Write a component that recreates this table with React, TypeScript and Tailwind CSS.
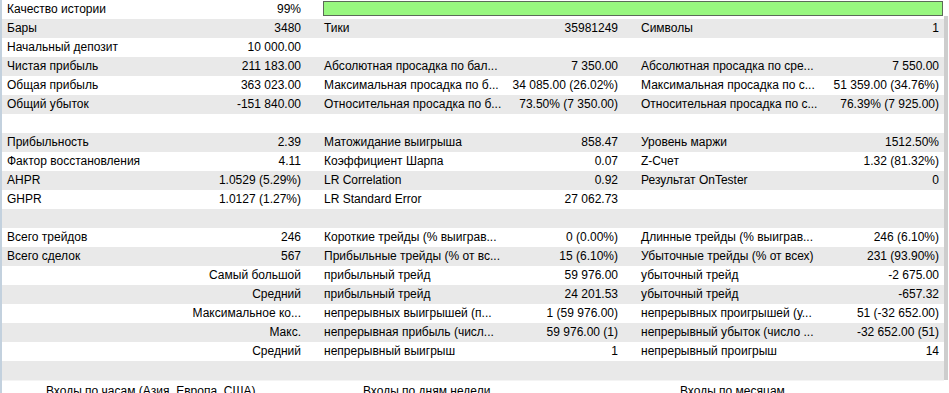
type Cell = [string, string] | null

type Row = {
	cells: [Cell, Cell, Cell]
	quality?: boolean
}

const rows: Row[] = [
	{ cells: [['Качество истории', '99%'], null, null], quality: true },
	{ cells: [['Бары', '3480'], ['Тики', '35981249'], ['Символы', '1']] },
	{ cells: [['Начальный депозит', '10 000.00'], null, null] },
	{ cells: [['Чистая прибыль', '211 183.00'], ['Абсолютная просадка по бал...', '7 350.00'], ['Абсолютная просадка по сре...', '7 550.00']] },
	{ cells: [['Общая прибыль', '363 023.00'], ['Максимальная просадка по б...', '34 085.00 (26.02%)'], ['Максимальная просадка по с...', '51 359.00 (34.76%)']] },
	{ cells: [['Общий убыток', '-151 840.00'], ['Относительная просадка по б...', '73.50% (7 350.00)'], ['Относительная просадка по с...', '76.39% (7 925.00)']] },
	{ cells: [null, null, null] },
	{ cells: [['Прибыльность', '2.39'], ['Матожидание выигрыша', '858.47'], ['Уровень маржи', '1512.50%']] },
	{ cells: [['Фактор восстановления', '4.11'], ['Коэффициент Шарпа', '0.07'], ['Z-Счет', '1.32 (81.32%)']] },
	{ cells: [['AHPR', '1.0529 (5.29%)'], ['LR Correlation', '0.92'], ['Результат OnTester', '0']] },
	{ cells: [['GHPR', '1.0127 (1.27%)'], ['LR Standard Error', '27 062.73'], null] },
	{ cells: [null, null, null] },
	{ cells: [['Всего трейдов', '246'], ['Короткие трейды (% выиграв...', '0 (0.00%)'], ['Длинные трейды (% выиграв...', '246 (6.10%)']] },
	{ cells: [['Всего сделок', '567'], ['Прибыльные трейды (% от вс...', '15 (6.10%)'], ['Убыточные трейды (% от всех)', '231 (93.90%)']] },
	{ cells: [['', 'Самый большой'], ['прибыльный трейд', '59 976.00'], ['убыточный трейд', '-2 675.00']] },
	{ cells: [['', 'Средний'], ['прибыльный трейд', '24 201.53'], ['убыточный трейд', '-657.32']] },
	{ cells: [['', 'Максимальное ко...'], ['непрерывных выигрышей (п...', '1 (59 976.00)'], ['непрерывных проигрышей (у...', '51 (-32 652.00)']] },
	{ cells: [['', 'Макс.'], ['непрерывная прибыль (числ...', '59 976.00 (1)'], ['непрерывный убыток (число ...', '-32 652.00 (51)']] },
	{ cells: [['', 'Средний'], ['непрерывный выигрыш', '1'], ['непрерывный проигрыш', '14']] },
	{ cells: [null, null, null] },
]

function Group({ cell, first, last }: { cell: Cell; first?: boolean; last?: boolean }) {
	const box = last ? 'flex flex-1 min-w-0' : first ? 'flex w-[315px] shrink-0' : 'flex w-[317px] shrink-0'
	return (
		<div className={box}>
			<div className={`shrink-0 whitespace-nowrap overflow-hidden ${first ? 'w-[188px] pl-[5px]' : 'w-[190px] pl-[7px]'}`}>{cell?.[0]}</div>
			<div className={`flex-1 min-w-0 text-right whitespace-nowrap ${last ? 'pr-[5px]' : 'pr-[16px]'}`}>{cell?.[1]}</div>
		</div>
	)
}

export default function App() {
	return (
		<div
			className="w-[949px] h-[393px] overflow-hidden bg-white flex text-[12px] leading-[19px] text-black"
			style={{ fontFamily: '"Liberation Sans", Arial, sans-serif' }}
		>
			<div className="w-[2px] shrink-0 bg-[#c3d1de]" />
			<div className="flex-1 min-w-0 flex flex-col">
				{rows.map((row, i) => (
					<div key={i} className={`h-[19px] shrink-0 flex ${i % 2 === 1 ? 'bg-[#e9e9e9]' : 'bg-white'}`}>
						{row.quality ? (
							<>
								<Group cell={row.cells[0]} first />
								<div className="flex-1 pl-[6px] pr-[1px] pt-[1px]">
									<div className="h-[15px] border border-[#5c6a58] bg-[#98f77f]" />
								</div>
							</>
						) : (
							<>
								<Group cell={row.cells[0]} first />
								<Group cell={row.cells[1]} />
								<Group cell={row.cells[2]} last />
							</>
						)}
					</div>
				))}
				<div className="flex shrink-0 pt-[1px] border-t border-[#f4f4f4]">
					<div className="w-[315px] pl-[44px]">Входы по часам (Азия, Европа, США)</div>
					<div className="w-[317px] pl-[46px]">Входы по дням недели</div>
					<div className="flex-1 pl-[46px]">Входы по месяцам</div>
				</div>
			</div>
			<div className="w-[5px] shrink-0 flex flex-col">
				<div className="h-[16px] shrink-0" />
				<div className="w-[4px] h-[364px] shrink-0 bg-[#cdcdcd]" />
			</div>
		</div>
	)
}
